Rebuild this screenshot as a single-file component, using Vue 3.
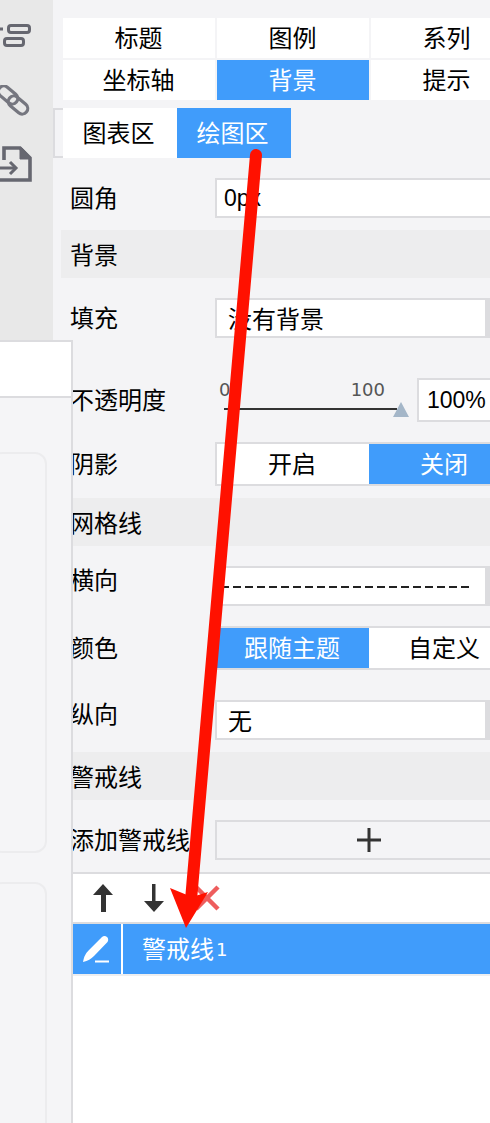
<script setup>
const tabs = [
  { name: '标题' },
  { name: '图例' },
  { name: '系列' },
  { name: '坐标轴' },
  { name: '背景', on: true },
  { name: '提示' }
]
</script>

<template>
  <div class="page">
    <aside class="rail">
      <svg class="rail-icon" width="32" height="24" viewBox="0 0 32 24" fill="none" stroke="#666770" stroke-width="3">
        <rect x="8.5" y="1.5" width="21" height="7" rx="2.5" />
        <rect x="4.5" y="14.5" width="19" height="7" rx="2.5" />
        <path d="M0 5h3" />
      </svg>
      <svg class="rail-icon link" width="30" height="32" viewBox="0 0 30 32" fill="none" stroke="#75767f" stroke-width="3.2">
        <rect x="-3" y="4.500" width="22" height="11" rx="5.500" transform="rotate(40 8 10)" />
        <rect x="7" y="14.500" width="22" height="11" rx="5.500" transform="rotate(40 18 20)" />
      </svg>
      <svg class="rail-icon file" width="32" height="36" viewBox="0 0 32 36" fill="none" stroke="#666770" stroke-width="3.6">
        <path d="M4 14V2h16l10 10v22H0" />
        <path d="M20 2h2l8 9v2H20z" fill="#666770" stroke-width="1" />
        <path d="M0 22h15" stroke-width="3" />
        <path d="M10 16l6 6-6 6" stroke-width="3" />
      </svg>
    </aside>

    <main class="panel">
      <div class="tabs">
        <div v-for="t in tabs" :key="t.name" class="tab" :class="{ on: t.on }">{{ t.name }}</div>
      </div>

      <div class="subtabs">
        <div class="subtab-edge"></div>
        <div class="subtab">图表区</div>
        <div class="subtab on">绘图区</div>
      </div>

      <div class="row gap-20">
        <label>圆角</label>
        <div class="input num">0px</div>
      </div>

      <div class="section">背景</div>

      <div class="row gap-20">
        <label>填充</label>
        <div class="select">没有背景</div>
      </div>

      <div class="row gap-40 tall">
        <label>不透明度</label>
        <div class="slider">
          <div class="slider-marks"><span>0</span><span>100</span></div>
          <div class="slider-track"><i class="slider-thumb"></i></div>
        </div>
        <div class="input num percent">100%</div>
      </div>

      <div class="row gap-20 tall">
        <label>阴影</label>
        <div class="seg">
          <div>开启</div>
          <div class="on">关闭</div>
        </div>
      </div>

      <div class="section">网格线</div>

      <div class="row gap-20">
        <label class="up-6">横向</label>
        <div class="select"><span class="dash"></span></div>
      </div>

      <div class="row gap-20 tall">
        <label>颜色</label>
        <div class="seg">
          <div class="on">跟随主题</div>
          <div>自定义</div>
        </div>
      </div>

      <div class="row gap-30">
        <label class="up-6">纵向</label>
        <div class="select">无</div>
      </div>

      <div class="section">警戒线</div>

      <div class="row gap-20">
        <label class="nowrap">添加警戒线</label>
        <div class="add">
          <svg width="24" height="24" viewBox="0 0 24 24" fill="#333"><path d="M10.500 0h3v10.500H24v3H13.500V24h-3V13.500H0v-3h10.500z" /></svg>
        </div>
      </div>

      <div class="list">
        <div class="toolbar">
          <svg class="tool up" width="20" height="28" viewBox="0 0 20 28" fill="#333"><path d="M10 0 20 11H13V28H8V11H0z" /></svg>
          <svg class="tool down" width="20" height="28" viewBox="0 0 20 28" fill="#333"><path d="M8 0h3.500V17H20L10 28 0 17H8z" /></svg>
          <svg class="tool close" width="26" height="26" viewBox="0 0 26 26" stroke="#ee5555" stroke-width="4.500"><path d="M2 2 24 24M24 2 2 24" /></svg>
        </div>
        <div class="line-item">
          <div class="line-edit">
            <svg width="30" height="30" viewBox="0 0 30 30" fill="#fff">
              <path d="M1 28c1-6 3-9 6-12L20 3c1.500-1.200 3.500-1.200 5 0s1.500 3.500 .5 5L12 22c-3 3-6 5-11 6z" />
              <rect x="13" y="26.500" width="14" height="2" />
            </svg>
          </div>
          <div class="line-name">警戒线<span class="line-no">1</span></div>
        </div>
      </div>
    </main>

    <div class="drawer">
      <div class="drawer-head"></div>
      <div class="card first"></div>
      <div class="card second"></div>
    </div>

    <svg class="arrow" width="490" height="1123" viewBox="0 0 490 1123">
      <path d="M256 155 191 900" stroke="#ff1100" stroke-width="12" stroke-linecap="round" fill="none" />
      <path d="M186 928 170 888 192 897 208 892z" fill="#ff1100" />
    </svg>
  </div>
</template>

<style>
html, body {
  margin: 0;
  background: #f4f4f6;
}
</style>

<style scoped>
.page {
  position: relative;
  display: flex;
  width: 490px;
  height: 1123px;
  overflow: hidden;
  background: #f4f4f6;
  color: #000;
  font-family: "Noto Sans CJK SC", "Liberation Sans", sans-serif;
  font-size: 24px;
  line-height: 30px;
}

.rail {
  flex: none;
  width: 53px;
  background: #e8e8e8;
}

.rail-icon {
  display: block;
}

.rail-icon:first-child {
  margin-top: 24px;
}

.link {
  margin-top: 37px;
}

.file {
  margin-top: 29px;
}

.panel {
  flex: none;
  width: 437px;
  padding-top: 18px;
}

.tabs {
  display: grid;
  grid-template-columns: repeat(3, 152px);
  gap: 2px;
  margin-left: 10px;
}

.tab {
  height: 40px;
  padding-right: 1px;
  box-sizing: border-box;
  line-height: 38px;
  text-align: center;
  background: #fff;
}

.tab.on,
.subtab.on,
.seg .on {
  background: #409cfb;
  color: #fff;
}

.subtabs {
  display: flex;
  margin-top: 8px;
}

.subtab-edge {
  width: 10px;
  box-sizing: border-box;
  border: 2px solid #dcdcdf;
  border-right: 0;
}

.subtab {
  width: 114px;
  height: 50px;
  padding-right: 3px;
  box-sizing: border-box;
  line-height: 48px;
  text-align: center;
  background: #fff;
}

.row {
  display: flex;
  align-items: center;
  height: 40px;
  padding-left: 17px;
}

.row.tall {
  height: 44px;
}

.gap-20 {
  margin-top: 20px;
}

.gap-30 {
  margin-top: 30px;
}

.gap-40 {
  margin-top: 40px;
}

.row label {
  flex: none;
  width: 145px;
  margin-top: -2px;
}

.row .nowrap {
  white-space: nowrap;
}

.row .up-6 {
  margin-top: -15px;
}

.input,
.select,
.seg,
.add {
  flex: none;
  box-sizing: border-box;
  height: 100%;
  border: 2px solid #dcdcdf;
  background: #fff;
}

.input {
  width: 300px;
  padding-left: 7px;
  line-height: 36px;
}

.num {
  font-family: "Liberation Sans", sans-serif;
  font-size: 23px;
}

.select {
  width: 275px;
  padding-left: 11px;
  border-right-width: 5px;
  line-height: 35px;
}

.dash {
  display: block;
  width: 249px;
  height: 2px;
  margin: 18px 0 0 -7px;
  background: repeating-linear-gradient(90deg, #222 0 8px, transparent 8px 12px);
}

.section {
  height: 48px;
  margin: 12px 0 0 8px;
  padding-left: 9px;
  line-height: 48px;
  background: #ededee;
}

.slider {
  flex: none;
  width: 188px;
  margin-left: 6px;
  align-self: flex-start;
}

.slider-marks {
  display: flex;
  justify-content: space-between;
  width: 166px;
  height: 24px;
  margin-left: -2px;
  font-family: "DejaVu Sans", sans-serif;
  font-size: 18px;
  line-height: 24px;
  color: #555;
}

.slider-track {
  position: relative;
  width: 173px;
  height: 2px;
  margin: 6px 0 0 3px;
  background: #333;
}

.slider-thumb {
  position: absolute;
  left: 169px;
  top: -6px;
  width: 0;
  height: 0;
  border-left: 8px solid transparent;
  border-right: 8px solid transparent;
  border-bottom: 15px solid #a4b6c8;
}

.percent {
  width: 100px;
  margin-left: 8px;
  padding-left: 8px;
  line-height: 40px;
}

.seg {
  display: flex;
  width: 310px;
  border-width: 0 0 2px;
  border-top: 2px solid #dcdcdf;
  border-left: 2px solid #dcdcdf;
}

.seg div {
  flex: none;
  width: 152px;
  padding-right: 2px;
  box-sizing: border-box;
  line-height: 38px;
  text-align: center;
}

.add {
  display: flex;
  align-items: center;
  justify-content: center;
  width: 310px;
  padding-right: 2px;
  background: #f4f4f6;
}

.list {
  height: 251px;
  margin-top: 12px;
  border-top: 2px solid #dcdcdf;
  background: #fff;
}

.toolbar {
  display: flex;
  align-items: center;
  height: 48px;
  padding-left: 40px;
  border-bottom: 2px solid #dcdcdf;
}

.tool {
  flex: none;
}

.down {
  margin-left: 31px;
}

.close {
  margin-left: 30px;
  opacity: .95;
}

.line-item {
  display: flex;
  height: 50px;
  border-bottom: 2px solid #edeef0;
  background: #409cfb;
  color: #fff;
  line-height: 48px;
}

.line-edit {
  display: flex;
  align-items: center;
  justify-content: center;
  flex: none;
  width: 70px;
  padding-left: 20px;
  box-sizing: border-box;
  border-right: 2px solid #fff;
}

.line-name {
  padding-left: 19px;
}

.line-no {
  font-family: "DejaVu Sans", sans-serif;
  font-size: 18px;
  margin-left: 2px;
  vertical-align: 2px;
}

.drawer {
  position: absolute;
  left: 0;
  top: 340px;
  bottom: 0;
  width: 73px;
  box-sizing: border-box;
  overflow: hidden;
  border-top: 2px solid #dcdcdf;
  border-right: 2px solid #dcdcdf;
  background: #f5f5f7;
}

.drawer-head {
  height: 54px;
  border-bottom: 2px solid #dcdcdf;
  background: #fff;
}

.card {
  box-sizing: border-box;
  width: 57px;
  margin-left: -10px;
  border: 2px solid #ececee;
  border-radius: 12px;
}

.first {
  height: 401px;
  margin-top: 54px;
}

.second {
  height: 400px;
  margin-top: 29px;
}

.arrow {
  position: absolute;
  left: 0;
  top: 0;
  pointer-events: none;
}
</style>
